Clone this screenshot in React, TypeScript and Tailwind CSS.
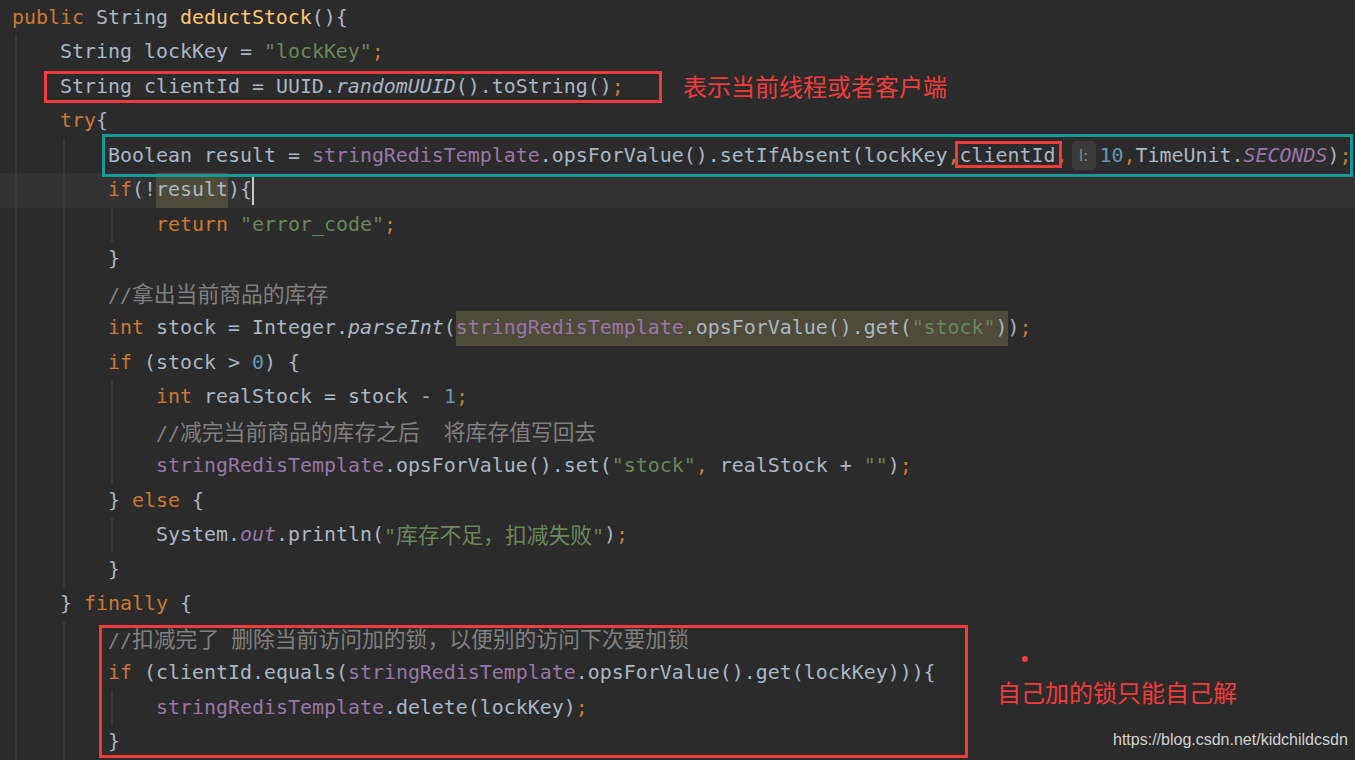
import clsx from "clsx";

type Tok =
  | { t: string; k: string }
  | { hl: Tok[] }
  | { hint: string }
  | { caret: true };

type Line = { indent: number; toks: Tok[]; current?: boolean };

const color: Record<string, string> = {
  t: "text-[#a9b7c6]",
  k: "text-[#cc7832]",
  p: "text-[#cc7832]",
  s: "text-[#6a8759]",
  n: "text-[#6897bb]",
  m: "text-[#ffc66d]",
  f: "text-[#9876aa]",
  fi: "text-[#9876aa] italic",
  i: "text-[#a9b7c6] italic",
  c: "text-[#808080]",
};

const T = (t: string, k = "t"): Tok => ({ t, k });

const lines: Line[] = [
  { indent: 0, toks: [T("public", "k"), T(" String "), T("deductStock", "m"), T("(){")] },
  { indent: 1, toks: [T("String lockKey = "), T('"lockKey"', "s"), T(";", "p")] },
  { indent: 1, toks: [T("String clientId = UUID."), T("randomUUID", "i"), T("().toString()"), T(";", "p")] },
  { indent: 1, toks: [T("try", "k"), T("{")] },
  {
    indent: 2,
    toks: [
      T("Boolean result = "),
      T("stringRedisTemplate", "f"),
      T(".opsForValue().setIfAbsent(lockKey"),
      T(",", "p"),
      T("clientId"),
      T(",", "p"),
      { hint: "l:" },
      T("10", "n"),
      T(",", "p"),
      T("TimeUnit."),
      T("SECONDS", "fi"),
      T(")"),
      T(";", "p"),
    ],
  },
  { indent: 2, current: true, toks: [T("if", "k"), T("(!"), { hl: [T("result")] }, T("){"), { caret: true }] },
  { indent: 3, toks: [T("return ", "k"), T('"error_code"', "s"), T(";", "p")] },
  { indent: 2, toks: [T("}")] },
  { indent: 2, toks: [T("//拿出当前商品的库存", "c")] },
  {
    indent: 2,
    toks: [
      T("int ", "k"),
      T("stock = Integer."),
      T("parseInt", "i"),
      T("("),
      { hl: [T("stringRedisTemplate", "f"), T(".opsForValue().get("), T('"stock"', "s"), T(")")] },
      T(")"),
      T(";", "p"),
    ],
  },
  { indent: 2, toks: [T("if ", "k"), T("(stock > "), T("0", "n"), T(") {")] },
  { indent: 3, toks: [T("int ", "k"), T("realStock = stock - "), T("1", "n"), T(";", "p")] },
  { indent: 3, toks: [T("//减完当前商品的库存之后  将库存值写回去", "c")] },
  {
    indent: 3,
    toks: [
      T("stringRedisTemplate", "f"),
      T(".opsForValue().set("),
      T('"stock"', "s"),
      T(",", "p"),
      T(" realStock + "),
      T('""', "s"),
      T(")"),
      T(";", "p"),
    ],
  },
  { indent: 2, toks: [T("} "), T("else", "k"), T(" {")] },
  { indent: 3, toks: [T("System."), T("out", "fi"), T(".println("), T('"库存不足，扣减失败"', "s"), T(")"), T(";", "p")] },
  { indent: 2, toks: [T("}")] },
  { indent: 1, toks: [T("} "), T("finally", "k"), T(" {")] },
  { indent: 2, toks: [T("//扣减完了 删除当前访问加的锁，以便别的访问下次要加锁", "c")] },
  {
    indent: 2,
    toks: [T("if", "k"), T(" (clientId.equals("), T("stringRedisTemplate", "f"), T(".opsForValue().get(lockKey))){")],
  },
  { indent: 3, toks: [T("stringRedisTemplate", "f"), T(".delete(lockKey)"), T(";", "p")] },
  { indent: 2, toks: [T("}")] },
];

// CJK glyphs are wider in the IDE than the mono font gives them
const withCjk = (text: string) =>
  text.split(/([\u3000-\u9fff\uff00-\uffef]+)/).map((part, i) =>
    /[\u3000-\u9fff\uff00-\uffef]/.test(part) ? (
      <span key={i} className="font-['Noto_Sans_CJK_SC',sans-serif] text-[21.8px]">
        {part}
      </span>
    ) : (
      part
    )
  );

const Token = ({ tok }: { tok: Tok }) => {
  if ("hl" in tok) {
    return (
      <span className="flex items-center self-stretch bg-[#4e4b39]">
        {tok.hl.map((x, i) => (
          <Token key={i} tok={x} />
        ))}
      </span>
    );
  }
  if ("hint" in tok) {
    return (
      <span className="ml-[4px] mr-[4px] flex h-[29px] w-[24px] items-center justify-center rounded-[4px] bg-[#3b3b3b] font-['DejaVu_Sans',sans-serif] text-[16px] text-[#8a8a8a]">
        {tok.hint}
      </span>
    );
  }
  if ("caret" in tok) {
    return <span className="h-[29px] w-[2px] bg-[#c8c8c8]" />;
  }
  return <span className={color[tok.k]}>{withCjk(tok.t)}</span>;
};

const CodeLine = ({ line }: { line: Line }) => (
  <div
    className={clsx(
      "flex h-[34.5px] items-center whitespace-pre pl-[12px]",
      line.current && "bg-[#323232]"
    )}
  >
    {Array.from({ length: line.indent }).map((_, i) => (
      <div key={i} className="flex h-full w-[48px] shrink-0">
        <div className="ml-[3px] h-full w-[2px] bg-[#393939]" />
      </div>
    ))}
    {line.toks.map((tok, i) => (
      <Token key={i} tok={tok} />
    ))}
  </div>
);

export default function App() {
  return (
    <div className="relative h-[760px] w-[1355px] overflow-hidden bg-[#2b2b2b] font-['DejaVu_Sans_Mono','Noto_Sans_CJK_SC',monospace] text-[19.93px]">
      <div className="mt-[0.5px] flex flex-col">
        {lines.map((line, i) => (
          <CodeLine key={i} line={line} />
        ))}
      </div>

      {/* annotations drawn over the code */}
      <div className="absolute left-[44px] top-[71px] h-[32px] w-[618px] border-[3px] border-[#f23b3b]" />
      <div className="absolute left-[683px] top-[70px] font-['Noto_Sans_CJK_SC',sans-serif] text-[24px] leading-[32px] text-[#f23b3b]">
        表示当前线程或者客户端
      </div>
      <div className="absolute left-[102px] top-[134px] h-[43px] w-[1251px] border-[3px] border-[#17999a]" />
      <div className="absolute left-[955px] top-[141px] h-[27px] w-[107px] border-[3px] border-[#f23b3b]" />
      <div className="absolute left-[99px] top-[625px] h-[133px] w-[869px] border-[3px] border-[#f23b3b]" />
      <div className="absolute left-[1022px] top-[656px] size-[6px] rounded-full bg-[#f23b3b]" />
      <div className="absolute left-[997px] top-[676px] font-['Noto_Sans_CJK_SC',sans-serif] text-[24px] leading-[32px] text-[#f23b3b]">
        自己加的锁只能自己解
      </div>
      <div className="absolute left-[1113px] top-[730px] font-['Liberation_Sans',sans-serif] text-[16px] leading-[20px] text-[#d2d2d2]">
        https://blog.csdn.net/kidchildcsdn
      </div>
    </div>
  );
}
